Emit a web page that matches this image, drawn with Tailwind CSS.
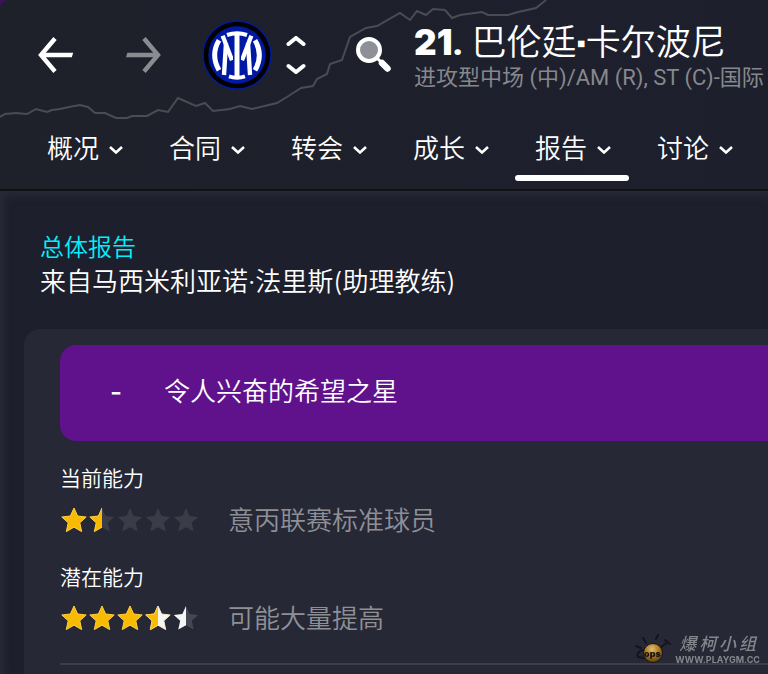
<!DOCTYPE html>
<html lang="zh-CN">
<head>
    <meta charset="UTF-8">
    <meta name="viewport" content="width=device-width, initial-scale=1.0">
    <title>球员报告</title>
    <script src="https://cdn.jsdelivr.net/npm/@tailwindcss/browser@4"></script>
</head>
<body class="min-h-screen flex flex-col overflow-x-hidden bg-[#3b1263] font-['Inter','Noto_Sans_CJK_SC',sans-serif] font-[350] text-white">
    <!-- Shared star shape -->
    <svg class="absolute w-0 h-0" aria-hidden="true">
        <defs>
            <path id="star" d="M14 2 L17.6 10 L26.2 11 L19.8 16.8 L21.7 25.6 L14 21.2 L6.3 25.6 L8.2 16.8 L1.8 11 L10.4 10 Z"/>
            <clipPath id="leftHalf"><rect x="0" y="0" width="14" height="28"/></clipPath>
        </defs>
    </svg>

    <!-- Header -->
    <header class="relative rounded-tl-lg bg-linear-to-r from-[#1e212a] to-[#1d1f2d] border-b-2 border-[#111116] overflow-hidden">
        <svg class="absolute left-0 top-0 w-[768px] h-[189px]" viewBox="0 0 768 189" fill="none" aria-hidden="true">
            <path d="M0 117 L5 114 L16 113 L27 114 L36 109 L47 112 L52 110 L60 109 L69 107 L80 105 L88 107 L95 113 L105 113 L116 118 L127 118 L132 116 L147 116 L158 110 L168 112 L178 98 L196 106 L205 103 L213 111 L230 109 L240 106 L252 109 L277 103 L287 97 L301 88 L313 86 L317 79 L327 74 L330 64 L342 60 L350 37 L366 28 L377 26 L400 13 L410 20 L417 11 L426 15 L433 9 L445 10 L452 18 L460 15 L482 12 L488 15 L508 15 L518 12 L536 8 L546 0" stroke="#4a4c54" stroke-width="2"/>
        </svg>

        <div class="relative flex items-center h-[115px] pb-1.5 pl-[38px] whitespace-nowrap">
            <button type="button" aria-label="后退" class="shrink-0">
                <svg class="w-9 h-9" viewBox="0 0 36 36" fill="none" stroke="#fff" stroke-width="4.4">
                    <path d="M17 1.5 L3 18 L17 34.5"/>
                    <path d="M3 15.8 H35.2 L33.8 20.2 H3 Z" fill="#fff" stroke="none"/>
                </svg>
            </button>
            <button type="button" aria-label="前进" class="shrink-0 ml-[52px]">
                <svg class="w-9 h-9" viewBox="0 0 36 36" fill="none" stroke="#8b8c91" stroke-width="4.4">
                    <path d="M18 1.5 L32 18 L18 34.5"/>
                    <path d="M32 15.8 H1.4 L0 20.2 H32 Z" fill="#8b8c91" stroke="none"/>
                </svg>
            </button>

            <!-- Club badge -->
            <svg class="shrink-0 ml-10 w-[70px] h-[70px]" viewBox="22 29 210 210" fill="none" role="img" aria-label="国际米兰">
                <circle cx="127" cy="134" r="104" fill="#0019a5"/>
                <circle cx="127" cy="134" r="100" fill="#000"/>
                <circle cx="127" cy="134" r="86" fill="#0019a5"/>
                <g stroke="#fff" stroke-width="13">
                    <path d="M73 90 Q47 134 73 180" stroke-width="15"/>
                    <path d="M181 90 Q207 134 181 180" stroke-width="15"/>
                    <path d="M84 76 L112 150"/>
                    <path d="M170 76 L142 150"/>
                    <path d="M94 98 L88 194"/>
                    <path d="M160 98 L166 194"/>
                    <path d="M127 70 V200" stroke="#0019a5" stroke-width="24"/>
                    <path d="M127 70 V200" stroke-width="15"/>
                    <path d="M97 74 Q127 64 157 74 M103 198 Q127 206 151 198" stroke-width="12"/>
                </g>
            </svg>

            <div class="shrink-0 ml-[14px] flex flex-col gap-[14px]">
                <button type="button" aria-label="上一名球员">
                    <svg class="w-5 h-3" viewBox="0 0 20 12" fill="none" stroke="#fff" stroke-width="4" stroke-linecap="round"><path d="M2.5 8 L10 2 L17.5 8"/></svg>
                </button>
                <button type="button" aria-label="下一名球员">
                    <svg class="w-5 h-3" viewBox="0 0 20 12" fill="none" stroke="#fff" stroke-width="4" stroke-linecap="round"><path d="M2.5 4 L10 10 L17.5 4"/></svg>
                </button>
            </div>

            <button type="button" aria-label="搜索" class="shrink-0 ml-[50px]">
                <svg class="w-9 h-9" viewBox="0 0 36 36" stroke="#fff" stroke-linecap="round">
                    <circle cx="13" cy="13" r="11" fill="#8f9097" stroke-width="4"/>
                    <path d="M22 22 L25 25" stroke-width="3"/>
                    <path d="M26 26 L31.5 31.5" stroke-width="6.5"/>
                </svg>
            </button>

            <div class="ml-[22px] pt-1">
                <h1 class="text-[35px] leading-10"><span class="font-black">21<span class="font-[Roboto]">.</span></span><span class="font-[Roboto]"> </span>巴伦廷<span class="font-['DejaVu_Sans'] text-[26px] leading-none align-[3px]">▪</span>卡尔波尼</h1>
                <p class="font-[Roboto,'Noto_Sans_CJK_SC',sans-serif] font-normal text-[22px] leading-7 text-[#87888d]">进攻型中场 (中)/AM (R), ST (C)-国际</p>
            </div>
        </div>

        <!-- Tabs -->
        <nav class="relative flex gap-2 pl-[27px] pb-2 text-[26px] whitespace-nowrap">
            <button type="button" class="shrink-0 flex items-center gap-[10px] h-[66px] pl-5 pr-[18px]">概况
                <svg class="w-[14px] h-2 mt-1" viewBox="0 0 14 8" fill="none" stroke="#fff" stroke-width="2.6"><path d="M1 1 L7 6.5 L13 1"/></svg>
            </button>
            <button type="button" class="shrink-0 flex items-center gap-[10px] h-[66px] pl-5 pr-[18px]">合同
                <svg class="w-[14px] h-2 mt-1" viewBox="0 0 14 8" fill="none" stroke="#fff" stroke-width="2.6"><path d="M1 1 L7 6.5 L13 1"/></svg>
            </button>
            <button type="button" class="shrink-0 flex items-center gap-[10px] h-[66px] pl-5 pr-[18px]">转会
                <svg class="w-[14px] h-2 mt-1" viewBox="0 0 14 8" fill="none" stroke="#fff" stroke-width="2.6"><path d="M1 1 L7 6.5 L13 1"/></svg>
            </button>
            <button type="button" class="shrink-0 flex items-center gap-[10px] h-[66px] pl-5 pr-[18px]">成长
                <svg class="w-[14px] h-2 mt-1" viewBox="0 0 14 8" fill="none" stroke="#fff" stroke-width="2.6"><path d="M1 1 L7 6.5 L13 1"/></svg>
            </button>
            <button type="button" aria-current="page" class="relative shrink-0 flex items-center gap-[10px] h-[66px] pl-5 pr-[18px]">报告
                <svg class="w-[14px] h-2 mt-1" viewBox="0 0 14 8" fill="none" stroke="#fff" stroke-width="2.6"><path d="M1 1 L7 6.5 L13 1"/></svg>
                <span class="absolute inset-x-0 bottom-0 h-[6px] rounded-full bg-white"></span>
            </button>
            <button type="button" class="shrink-0 flex items-center gap-[10px] h-[66px] pl-5 pr-[18px]">讨论
                <svg class="w-[14px] h-2 mt-1" viewBox="0 0 14 8" fill="none" stroke="#fff" stroke-width="2.6"><path d="M1 1 L7 6.5 L13 1"/></svg>
            </button>
        </nav>
    </header>

    <!-- Report -->
    <main class="grow flex flex-col bg-[#1d1f2d] shadow-[inset_4px_4px_8px_#2a2b39] pt-[41px] pl-6">
        <div class="pl-4">
            <h2 class="text-[24px] leading-8 text-[#00f0ff]">总体报告</h2>
            <p class="text-[26px] leading-9">来自马西米利亚诺·法里斯(助理教练)</p>
        </div>

        <section class="grow mt-[29px] pt-4 pl-9 rounded-tl-2xl bg-[#262836]">
            <div class="flex items-center h-24 pb-1 pl-[50px] rounded-l-2xl bg-[#5f128c] text-[26px]">
                <span class="w-[54px] font-medium">-</span>
                <span>令人兴奋的希望之星</span>
            </div>

            <h3 class="mt-5 h-9 leading-9 text-[21px]">当前能力</h3>
            <div class="flex items-center gap-7 h-[46px]">
                <svg class="w-[140px] h-7" viewBox="0 0 140 28" role="img" aria-label="1.5 星">
                    <use href="#star" fill="#f8bb00" stroke="#ffd044"/>
                    <g fill="#3b3c48">
                        <use href="#star" x="28"/>
                        <use href="#star" x="56"/>
                        <use href="#star" x="84"/>
                        <use href="#star" x="112"/>
                    </g>
                    <g transform="translate(28 0)" clip-path="url(#leftHalf)" fill="#f8bb00" stroke="#ffd044"><use href="#star"/></g>
                </svg>
                <span class="text-[26px] text-[#8f9096]">意丙联赛标准球员</span>
            </div>

            <h3 class="mt-[17px] h-9 leading-9 text-[21px]">潜在能力</h3>
            <div class="flex items-center gap-7 h-11">
                <svg class="w-[140px] h-7" viewBox="0 0 140 28" role="img" aria-label="3.5 至 4.5 星">
                    <g fill="#f8bb00" stroke="#ffd044">
                        <use href="#star"/>
                        <use href="#star" x="28"/>
                        <use href="#star" x="56"/>
                    </g>
                    <use href="#star" x="84" fill="#f5f5f5" stroke="#f5ecd0"/>
                    <use href="#star" x="112" fill="#454753"/>
                    <g transform="translate(84 0)" clip-path="url(#leftHalf)" fill="#f8bb00" stroke="#ffd044"><use href="#star"/></g>
                    <g transform="translate(112 0)" clip-path="url(#leftHalf)" fill="#f5f5f5"><use href="#star"/></g>
                </svg>
                <span class="text-[26px] text-[#8f9096]">可能大量提高</span>
            </div>

            <hr class="mt-[23px] border-t-2 border-[#3c3d49]">
        </section>
    </main>

    <!-- Site watermark -->
    <div class="fixed right-2 bottom-2 flex items-center text-[#85868c]">
        <svg class="w-9 h-8 mr-1" viewBox="0 0 36 32" fill="none" aria-hidden="true">
            <defs>
                <radialGradient id="ball" cx="0.45" cy="0.3" r="0.7">
                    <stop offset="0" stop-color="#d9c27a"/>
                    <stop offset="0.5" stop-color="#b27c1c"/>
                    <stop offset="1" stop-color="#5c3c10"/>
                </radialGradient>
            </defs>
            <g stroke="#14141b" stroke-width="2" stroke-linecap="round">
                <path d="M11 9 L8 4 M21 5 L23 1 M6 14 L1 12 M26 13 L33 8 M30 6 L35 10 M8 16 Q1 18 3 23 L9 24"/>
            </g>
            <circle cx="18" cy="19" r="9.5" fill="url(#ball)" stroke="#14141b"/>
            <text x="9" y="23" fill="#14141b" font-family="Inter" font-size="9" font-weight="900">ops</text>
        </svg>
        <div class="leading-none">
            <p class="text-[17px] leading-5 font-medium italic flex justify-between px-1"><span>爆</span><span>柯</span><span>小</span><span>组</span></p>
            <p class="text-[9px] leading-3 font-bold">WWW.PLAYGM.CC</p>
        </div>
    </div>
</body>
</html>
